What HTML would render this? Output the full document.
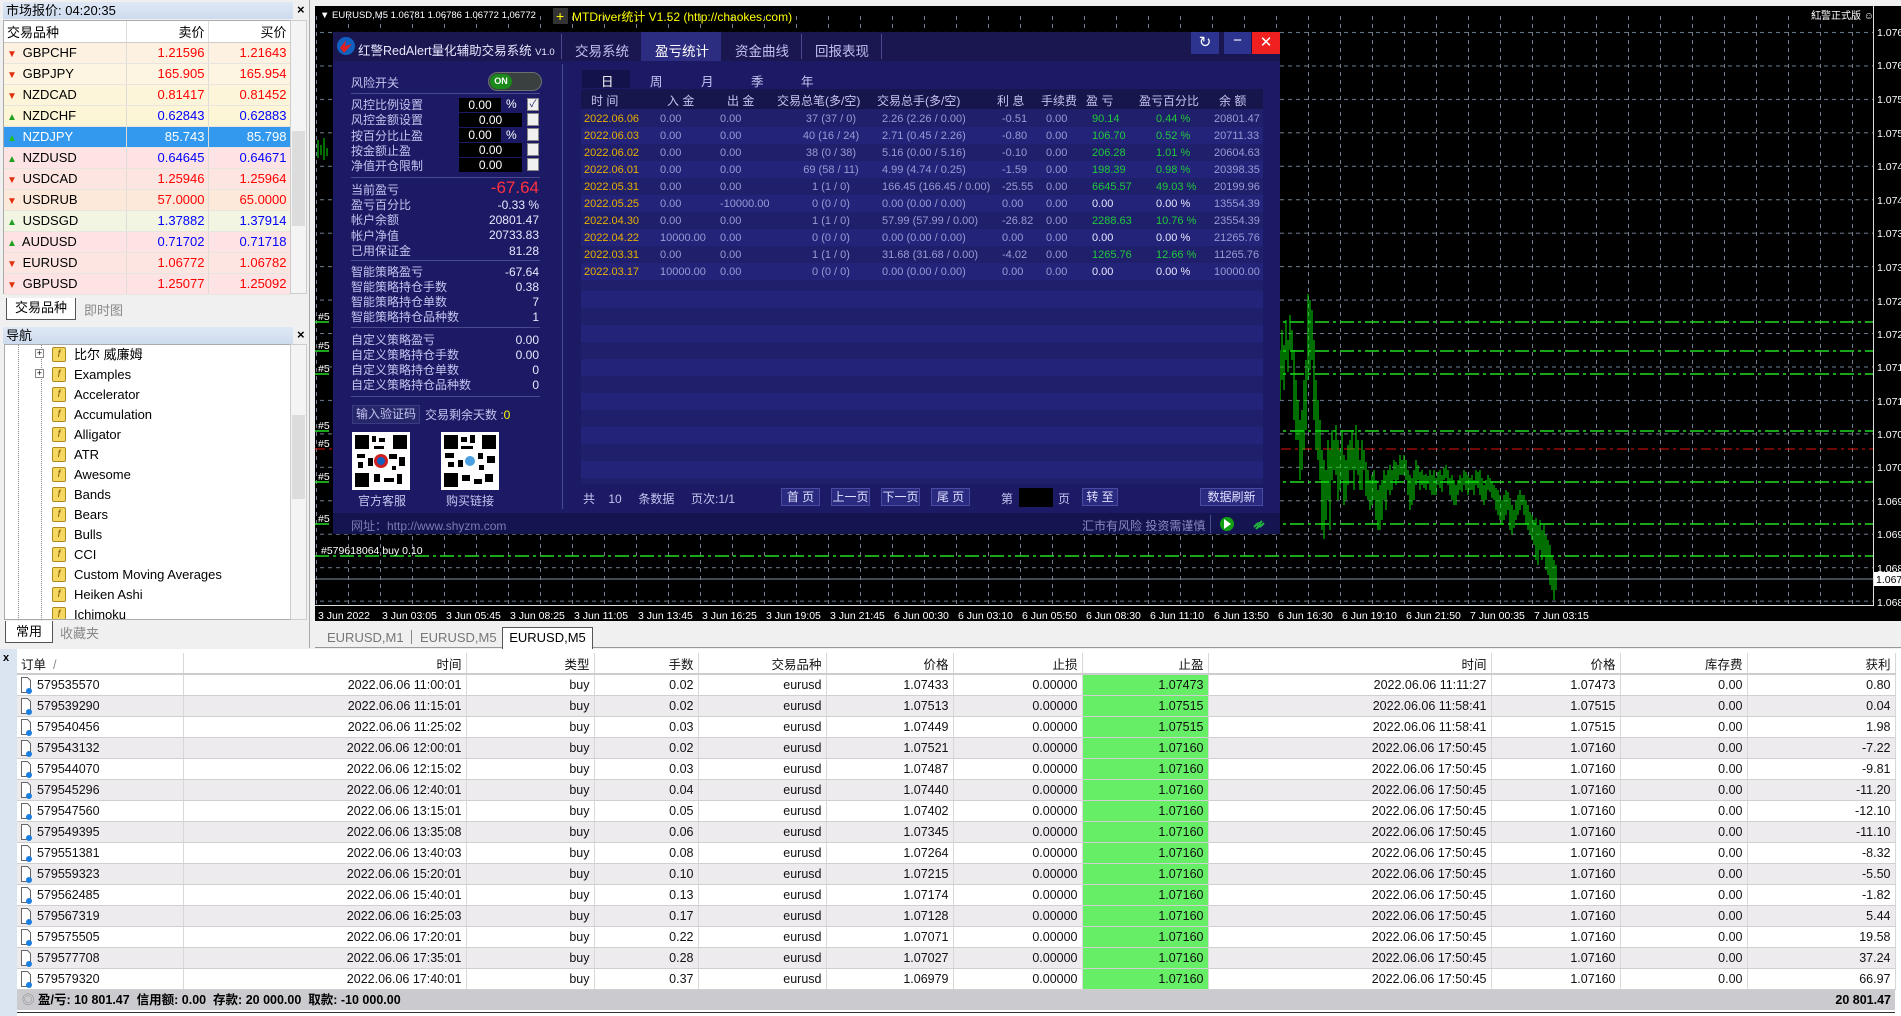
<!DOCTYPE html>
<html><head><meta charset="utf-8">
<style>
*{margin:0;padding:0;box-sizing:border-box}
body{width:1901px;height:1016px;overflow:hidden;background:#f0f0f0;position:relative;font-family:"Liberation Sans","Noto Sans CJK SC",sans-serif;font-size:12px}
.a{position:absolute;white-space:nowrap}
.mw td{height:21px;border-right:1px solid #e0dcd8;border-bottom:1px solid #e8e4e0;font-size:13px;padding:0 3px}
.ar{font-size:10px;display:inline-block;width:12px}
.dl{color:#c4c4f0;font-size:12px}
.dv{color:#e8e8ff;font-size:12px;text-align:right}
.tb td{height:21px;font-size:12.5px;color:#111;padding:0 4px;text-align:right;border-right:1px solid #d8d8d8;border-bottom:1px solid #d0d0d0}
.tb tr:nth-child(even) td{background:#eeebee}
.tb tr:nth-child(odd) td{background:#fff}
.tb td.g{background:#66ee66 !important}
.tb td.o{text-align:left;padding-left:20px;position:relative}
.st td{height:17px;font-size:11px;color:#9a9ad4;white-space:nowrap;padding:0 3px}
.st tr:nth-child(odd) td{background:#1f1f6c}
.st tr:nth-child(even) td{background:#23237a}
.st td.d{color:#e8b000}
.st td.gr{color:#22c83a}
.btn{position:absolute;height:18px;border:1px solid #4a4aa0;background:#2a2a80;color:#e0e0ff;font-size:12px;text-align:center;line-height:16px}
.ni{position:relative;height:20px}
.fi{position:absolute;left:52px;top:2px;width:14px;height:15px;background:#f5d860;border:1px solid #b08a20;border-radius:2px;font-size:10px;line-height:13px;text-align:center;color:#805000;font-style:italic}
.nt{position:absolute;left:74px}
</style></head><body>

<!-- LEFT: Market watch -->
<div class="a" style="left:0;top:0;width:310px;height:648px;background:#f0f0f0;border-right:1px solid #aaa"></div>
<div class="a" style="left:3px;top:2px;width:290px;height:17px;background:linear-gradient(#dfe8f5,#cddbef);font-size:13px;line-height:17px;padding-left:3px">市场报价: 04:20:35</div>
<div class="a" style="left:297px;top:2px;font-size:13px;font-weight:bold">×</div>
<div class="a" style="left:3px;top:20px;width:287px;height:274px;background:#fff;border:1px solid #aaa">
<table class="mw" style="border-collapse:collapse;width:286px;table-layout:fixed">
<colgroup><col style="width:122px"><col style="width:82px"><col style="width:82px"></colgroup>
<tr style="background:#fff"><td style="height:20px;border-bottom:1px solid #ccc">交易品种</td><td style="text-align:right;border-bottom:1px solid #ccc">卖价</td><td style="text-align:right;border-bottom:1px solid #ccc">买价</td></tr>
<tr style="background:#fdf2e2"><td><span class="ar" style="color:#e03010">▼</span> GBPCHF</td><td style="text-align:right;color:#f00">1.21596</td><td style="text-align:right;color:#f00">1.21643</td></tr>
<tr style="background:#fdf4e2"><td><span class="ar" style="color:#e03010">▼</span> GBPJPY</td><td style="text-align:right;color:#f00">165.905</td><td style="text-align:right;color:#f00">165.954</td></tr>
<tr style="background:#fdf5da"><td><span class="ar" style="color:#e03010">▼</span> NZDCAD</td><td style="text-align:right;color:#f00">0.81417</td><td style="text-align:right;color:#f00">0.81452</td></tr>
<tr style="background:#fcf6d6"><td><span class="ar" style="color:#20a020">▲</span> NZDCHF</td><td style="text-align:right;color:#00f">0.62843</td><td style="text-align:right;color:#00f">0.62883</td></tr>
<tr style="background:#3399ee;color:#fff"><td><span class="ar" style="color:#20c020">▲</span> NZDJPY</td><td style="text-align:right">85.743</td><td style="text-align:right">85.798</td></tr>
<tr style="background:#fde3e3"><td><span class="ar" style="color:#20a020">▲</span> NZDUSD</td><td style="text-align:right;color:#00f">0.64645</td><td style="text-align:right;color:#00f">0.64671</td></tr>
<tr style="background:#fde5e1"><td><span class="ar" style="color:#e03010">▼</span> USDCAD</td><td style="text-align:right;color:#f00">1.25946</td><td style="text-align:right;color:#f00">1.25964</td></tr>
<tr style="background:#fde9da"><td><span class="ar" style="color:#e03010">▼</span> USDRUB</td><td style="text-align:right;color:#f00">57.0000</td><td style="text-align:right;color:#f00">65.0000</td></tr>
<tr style="background:#f2f5e2"><td><span class="ar" style="color:#20a020">▲</span> USDSGD</td><td style="text-align:right;color:#00f">1.37882</td><td style="text-align:right;color:#00f">1.37914</td></tr>
<tr style="background:#fde3e3"><td><span class="ar" style="color:#20a020">▲</span> AUDUSD</td><td style="text-align:right;color:#00f">0.71702</td><td style="text-align:right;color:#00f">0.71718</td></tr>
<tr style="background:#fde6e2"><td><span class="ar" style="color:#e03010">▼</span> EURUSD</td><td style="text-align:right;color:#f00">1.06772</td><td style="text-align:right;color:#f00">1.06782</td></tr>
<tr style="background:#fde3e3"><td><span class="ar" style="color:#e03010">▼</span> GBPUSD</td><td style="text-align:right;color:#f00">1.25077</td><td style="text-align:right;color:#f00">1.25092</td></tr>
</table></div>
<div class="a" style="left:290px;top:20px;width:17px;height:274px;background:#f4f4f4;border:1px solid #ccc"><div style="position:absolute;top:110px;left:1px;width:13px;height:95px;background:#dcdcdc"></div></div>
<div class="a" style="left:6px;top:298px;width:70px;height:22px;background:#fff;border:1px solid #555;border-top:none;font-size:13px;text-align:center;line-height:20px">交易品种</div>
<div class="a" style="left:84px;top:300px;font-size:13px;color:#888">即时图</div>

<!-- Navigator -->
<div class="a" style="left:3px;top:327px;width:290px;height:17px;background:linear-gradient(#dfe8f5,#cddbef);font-size:13px;line-height:17px;padding-left:3px">导航</div>
<div class="a" style="left:297px;top:327px;font-size:13px;font-weight:bold">×</div>
<div class="a" style="left:4px;top:344px;width:303px;height:276px;background:#fff;border:1px solid #aaa"></div>
<div class="a" style="left:290px;top:344px;width:17px;height:276px;background:#f4f4f4;border:1px solid #ccc"><div style="position:absolute;top:70px;left:1px;width:13px;height:84px;background:#dcdcdc"></div></div>
<div class="a" style="left:18px;top:345px;width:0;height:275px;border-left:1px dotted #888"></div>
<div class="a" style="left:41px;top:345px;width:0;height:275px;border-left:1px dotted #888"></div>
<div class="a" style="left:5px;top:621px;width:48px;height:22px;background:#fff;border:1px solid #555;border-top:none;font-size:13px;text-align:center">常用</div>
<div class="a" style="left:60px;top:623px;font-size:13px;color:#888">收藏夹</div>

<!-- CHART -->
<div class="a" style="left:315px;top:6px;width:1586px;height:615px;background:#000"></div>
<svg class="a" style="left:0;top:0" width="1901" height="622">
<defs><pattern id="gv" x="316" y="0" width="32" height="8" patternUnits="userSpaceOnUse"><rect x="0" y="0" width="1" height="4" fill="#708090"/></pattern>
<pattern id="gh" x="0" y="0" width="8" height="33.45" patternUnits="userSpaceOnUse"><rect x="0" y="32" width="4" height="1" fill="#708090"/></pattern></defs>
<rect x="316" y="14" width="1557" height="591" fill="url(#gv)"/>
<rect x="316" y="14" width="1557" height="591" fill="url(#gh)"/>
<rect x="1873" y="6" width="1" height="600" fill="#ddd"/>
<rect x="315" y="605" width="1559" height="1" fill="#ddd"/>
<g stroke="#22dd22" stroke-width="1.5" stroke-dasharray="14,4,3,4">
<line x1="315" y1="322" x2="1873" y2="322"/><line x1="315" y1="351" x2="1873" y2="351"/><line x1="315" y1="374" x2="1873" y2="374"/><line x1="315" y1="431" x2="1873" y2="431"/><line x1="315" y1="482" x2="1873" y2="482"/><line x1="315" y1="524" x2="1873" y2="524"/><line x1="315" y1="556" x2="1873" y2="556"/></g>
<line x1="315" y1="449" x2="1873" y2="449" stroke="#e01010" stroke-dasharray="10,4,3,4"/>
<line x1="315" y1="579" x2="1873" y2="579" stroke="#8090a0"/>
<rect x="1874" y="572" width="27" height="14" fill="#fff"/>
<path stroke="#00dd00" stroke-width="1" fill="none" d="M318 140V158M321 145V155M324 138V160M327 148V156M1280 350V400M1282 330V380M1284 345V390M1286 320V360M1288 340V372M1290 315V350M1292 330V360M1294 350V420M1296 380V440M1298 400V440M1300 420V480M1302 410V470M1304 380V450M1306 360V430M1308 294V380M1310 300V370M1312 310V360M1314 340V420M1316 380V450M1318 400V460M1320 420V480M1322 450V530M1324 460V539M1326 470V520M1328 440V500M1330 450V530M1332 430V480M1334 440V470M1336 425V475M1338 440V500M1340 450V490M1342 430V480M1344 455V505M1346 460V500M1348 445V485M1350 440V470M1352 430V470M1354 448V490M1356 425V470M1358 440V475M1360 460V490M1362 440V490M1364 450V470M1366 462V496M1368 470V500M1370 480V510M1372 475V505M1374 470V500M1376 480V520M1378 490V530M1380 485V530M1382 480V520M1384 470V500M1386 475V510M1388 470V490M1390 465V495M1392 470V490M1394 460V480M1396 462V485M1398 465V480M1400 455V475M1402 460V475M1404 455V475M1406 460V480M1408 470V495M1410 475V510M1412 478V505M1414 470V500M1416 460V485M1418 465V480M1420 472V490M1422 470V485M1424 475V488M1426 474V490M1428 476V484M1430 470V490M1432 475V495M1434 470V495M1436 478V495M1438 472V485M1440 470V488M1442 475V492M1444 468V480M1446 465V478M1448 470V485M1450 478V495M1452 475V500M1454 480V505M1456 485V505M1458 480V495M1460 475V490M1462 478V492M1464 470V485M1466 472V490M1468 475V495M1470 478V490M1472 475V490M1474 480V495M1476 470V485M1478 472V488M1480 470V495M1482 478V500M1484 485V505M1486 480V500M1488 475V490M1490 478V492M1492 482V498M1494 485V500M1496 488V510M1498 490V515M1500 495V520M1502 500V525M1504 495V520M1506 490V515M1508 492V510M1510 498V530M1512 505V535M1514 510V528M1516 500V520M1518 495V515M1520 490V510M1522 495V505M1524 495V515M1526 500V525M1528 505V530M1530 512V535M1532 515V540M1534 520V545M1536 518V560M1538 525V565M1540 520V550M1542 530V560M1544 525V555M1546 535V570M1548 540V575M1550 545V585M1552 555V590M1554 560V600M1556 565V590"/>
<g fill="#fff" font-size="10.5" font-family="Liberation Sans,sans-serif">
<text x="1877" y="36">1.0765</text><text x="1877" y="69">1.0760</text><text x="1877" y="103">1.0755</text><text x="1877" y="137">1.0750</text><text x="1877" y="170">1.0745</text><text x="1877" y="204">1.0740</text><text x="1877" y="237">1.0735</text><text x="1877" y="271">1.0730</text><text x="1877" y="305">1.0725</text><text x="1877" y="338">1.0720</text><text x="1877" y="371">1.0715</text><text x="1877" y="405">1.0710</text><text x="1877" y="438">1.0705</text><text x="1877" y="471">1.0700</text><text x="1877" y="505">1.0695</text><text x="1877" y="538">1.0690</text><text x="1877" y="572">1.0685</text><text x="1877" y="606">1.0680</text>
<text x="1876" y="583" fill="#000">1.0677</text>
<text x="318" y="619">3 Jun 2022</text><text x="382" y="619">3 Jun 03:05</text><text x="446" y="619">3 Jun 05:45</text><text x="510" y="619">3 Jun 08:25</text><text x="574" y="619">3 Jun 11:05</text><text x="638" y="619">3 Jun 13:45</text><text x="702" y="619">3 Jun 16:25</text><text x="766" y="619">3 Jun 19:05</text><text x="830" y="619">3 Jun 21:45</text><text x="894" y="619">6 Jun 00:30</text><text x="958" y="619">6 Jun 03:10</text><text x="1022" y="619">6 Jun 05:50</text><text x="1086" y="619">6 Jun 08:30</text><text x="1150" y="619">6 Jun 11:10</text><text x="1214" y="619">6 Jun 13:50</text><text x="1278" y="619">6 Jun 16:30</text><text x="1342" y="619">6 Jun 19:10</text><text x="1406" y="619">6 Jun 21:50</text><text x="1470" y="619">7 Jun 00:35</text><text x="1534" y="619">7 Jun 03:15</text>
<text x="320" y="18" font-size="9.5">▼ EURUSD,M5  1.06781 1.06786 1.06772 1.06772</text>
<text x="1811" y="19" font-size="10">紅警正式版 ☺</text>
<text x="318" y="320">#5</text><text x="318" y="349">#5</text><text x="318" y="372">#5</text><text x="318" y="429">#5</text><text x="318" y="447">#5</text><text x="318" y="480">#5</text><text x="318" y="522">#5</text><text x="321" y="554">#579618064 buy 0.10</text>
</g>
<rect x="553" y="8" width="15" height="16" fill="#333"/>
<text x="556" y="21" fill="#ff0" font-size="14">+</text>
<text x="572" y="21" fill="#ffff00" font-size="12" font-family="Liberation Sans,Noto Sans CJK SC,sans-serif">MTDriver统计 V1.52  (http://chaokes.com)</text>
</svg>

<!-- DIALOG -->
<div class="a" style="left:333px;top:32px;width:947px;height:502px;background:#1c1a64"></div>
<div class="a" style="left:333px;top:32px;width:947px;height:29px;background:#191650"></div>
<svg class="a" style="left:336px;top:36px" width="20" height="20"><circle cx="10" cy="10" r="9" fill="#1060c0"/><path d="M4 12L10 4L9 10L16 8L8 17" fill="#e02020"/></svg>
<div class="a" style="left:358px;top:40px;color:#e8e8ff;font-size:12.5px">红警RedAlert量化辅助交易系统 <span style="font-size:9.5px">V1.0</span></div>
<div class="a" style="left:561px;top:34px;width:1px;height:25px;background:#4a4a90"></div>
<div class="a" style="left:575px;top:40px;color:#c0c0f0;font-size:13.5px">交易系统</div>
<div class="a" style="left:641px;top:32px;width:80px;height:29px;background:#2c2c80"></div>
<div class="a" style="left:655px;top:40px;color:#fff;font-size:13.5px">盈亏统计</div>
<div class="a" style="left:735px;top:40px;color:#c0c0f0;font-size:13.5px">资金曲线</div>
<div class="a" style="left:801px;top:34px;width:1px;height:25px;background:#4a4a90"></div>
<div class="a" style="left:815px;top:40px;color:#c0c0f0;font-size:13.5px">回报表现</div>
<div class="a" style="left:881px;top:34px;width:1px;height:25px;background:#4a4a90"></div>
<div class="a" style="left:1191px;top:32px;width:28px;height:22px;background:#2c3490;color:#fff;text-align:center;font-size:15px;line-height:22px">↻</div>
<div class="a" style="left:1224px;top:32px;width:27px;height:22px;background:#2c3490;color:#fff;text-align:center;font-size:15px;line-height:18px">−</div>
<div class="a" style="left:1252px;top:32px;width:28px;height:22px;background:#ee2020;color:#fff;text-align:center;font-size:15px;line-height:22px">✕</div>

<!-- dialog left -->
<div class="a dl" style="left:351px;top:74px">风险开关</div>
<div class="a" style="left:488px;top:72px;width:54px;height:19px;border-radius:10px;background:#3a4040;border:1px solid #6a7070"><div style="position:absolute;left:1px;top:1px;width:22px;height:15px;border-radius:8px;background:#1a8a1a;color:#fff;font-size:9px;font-weight:bold;text-align:center;line-height:15px">ON</div></div>
<div class="a" style="left:351px;top:93px;width:189px;height:1px;background:#4a4a90"></div>
<div class="a dl" style="left:351px;top:98px;line-height:15.3px">风控比例设置<br>风控金额设置<br>按百分比止盈<br>按金额止盈<br>净值开仓限制</div>
<div class="a" style="left:459px;top:98px;width:42px;height:14px;background:#000;color:#fff;text-align:center;font-size:12px;line-height:14px">0.00</div>
<div class="a" style="left:459px;top:113px;width:63px;height:14px;background:#000;color:#fff;text-align:center;font-size:12px;line-height:14px">0.00</div>
<div class="a" style="left:459px;top:128px;width:42px;height:14px;background:#000;color:#fff;text-align:center;font-size:12px;line-height:14px">0.00</div>
<div class="a" style="left:459px;top:143px;width:63px;height:14px;background:#000;color:#fff;text-align:center;font-size:12px;line-height:14px">0.00</div>
<div class="a" style="left:459px;top:158px;width:63px;height:14px;background:#000;color:#fff;text-align:center;font-size:12px;line-height:14px">0.00</div>
<div class="a" style="left:506px;top:97px;color:#fff">%</div><div class="a" style="left:506px;top:128px;color:#fff">%</div>
<div class="a" style="left:527px;top:98px;width:12px;height:13px;background:#f0f0f0;border:1px solid #888;color:#226;font-size:10px;line-height:11px;text-align:center">✓</div>
<div class="a" style="left:527px;top:113px;width:12px;height:13px;background:#f0f0f0;border:1px solid #888"></div>
<div class="a" style="left:527px;top:128px;width:12px;height:13px;background:#f0f0f0;border:1px solid #888"></div>
<div class="a" style="left:527px;top:143px;width:12px;height:13px;background:#f0f0f0;border:1px solid #888"></div>
<div class="a" style="left:527px;top:158px;width:12px;height:13px;background:#f0f0f0;border:1px solid #888"></div>
<div class="a" style="left:351px;top:177px;width:189px;height:1px;background:#4a4a90"></div>
<div class="a dl" style="left:351px;top:183px;line-height:15.2px">当前盈亏<br>盈亏百分比<br>帐户余额<br>帐户净值<br>已用保证金</div>
<div class="a" style="left:470px;top:178px;width:69px;text-align:right;color:#ff3040;font-size:17px">-67.64</div>
<div class="a dv" style="left:440px;top:198px;width:99px;line-height:15.2px">-0.33 %<br>20801.47<br>20733.83<br>81.28</div>
<div class="a" style="left:351px;top:260px;width:189px;height:1px;background:#4a4a90"></div>
<div class="a dl" style="left:351px;top:265px;line-height:15px">智能策略盈亏<br>智能策略持仓手数<br>智能策略持仓单数<br>智能策略持仓品种数</div>
<div class="a dv" style="left:440px;top:265px;width:99px;line-height:15px">-67.64<br>0.38<br>7<br>1</div>
<div class="a" style="left:351px;top:327px;width:189px;height:1px;background:#4a4a90"></div>
<div class="a dl" style="left:351px;top:333px;line-height:15px">自定义策略盈亏<br>自定义策略持仓手数<br>自定义策略持仓单数<br>自定义策略持仓品种数</div>
<div class="a dv" style="left:440px;top:333px;width:99px;line-height:15px">0.00<br>0.00<br>0<br>0</div>
<div class="a" style="left:351px;top:396px;width:189px;height:1px;background:#4a4a90"></div>
<div class="a" style="left:352px;top:405px;width:68px;height:19px;background:#26266a;border:1px solid #3a3a80;color:#c4c4f0;font-size:12px;text-align:center;line-height:17px">输入验证码</div>
<div class="a dl" style="left:425px;top:406px">交易剩余天数 :<span style="color:#ff0">0</span></div>
<svg class="a" style="left:352px;top:432px" width="58" height="58"><rect width="58" height="58" fill="#fff"/><g fill="#000"><rect x="3" y="3" width="14" height="14"/><rect x="41" y="3" width="14" height="14"/><rect x="3" y="41" width="14" height="14"/><rect x="20" y="4" width="4" height="6"/><rect x="27" y="6" width="6" height="4"/><rect x="22" y="14" width="10" height="3"/><rect x="5" y="22" width="8" height="4"/><rect x="16" y="26" width="5" height="8"/><rect x="37" y="22" width="8" height="5"/><rect x="47" y="25" width="6" height="9"/><rect x="22" y="42" width="6" height="8"/><rect x="32" y="46" width="10" height="4"/><rect x="45" y="42" width="5" height="10"/><rect x="6" y="30" width="5" height="6"/><rect x="40" y="34" width="4" height="4"/></g><circle cx="29" cy="29" r="7" fill="#d02020"/><circle cx="29" cy="29" r="4" fill="#1060c0"/></svg>
<svg class="a" style="left:441px;top:432px" width="58" height="58"><rect width="58" height="58" fill="#fff"/><g fill="#000"><rect x="3" y="3" width="14" height="14"/><rect x="41" y="3" width="14" height="14"/><rect x="3" y="41" width="14" height="14"/><rect x="20" y="5" width="6" height="5"/><rect x="29" y="3" width="5" height="8"/><rect x="20" y="14" width="12" height="3"/><rect x="4" y="21" width="9" height="5"/><rect x="17" y="28" width="5" height="7"/><rect x="37" y="21" width="5" height="6"/><rect x="46" y="24" width="8" height="7"/><rect x="21" y="43" width="8" height="6"/><rect x="33" y="47" width="8" height="5"/><rect x="44" y="42" width="8" height="8"/><rect x="7" y="30" width="6" height="5"/><rect x="38" y="33" width="5" height="5"/></g><circle cx="29" cy="29" r="5" fill="#4aa0e0"/></svg>
<div class="a dl" style="left:358px;top:492px">官方客服</div>
<div class="a dl" style="left:446px;top:492px">购买链接</div>
<div class="a" style="left:562px;top:64px;width:1px;height:445px;background:#4a4a90"></div>

<!-- dialog right table -->
<div class="a" style="left:581px;top:70px;width:682px;height:414px;background:repeating-linear-gradient(#1f1f6c 0 17px,#23237a 17px 34px)"></div>
<div class="a" style="left:581px;top:70px;width:682px;height:19px;background:#1c1a64"></div>
<div class="a" style="left:582px;top:70px;width:48px;height:18px;background:#13124a"></div>
<div class="a" style="left:601px;top:71px;color:#fff;font-size:12.5px">日</div>
<div class="a" style="left:650px;top:71px;color:#c4c4f0;font-size:12.5px">周</div>
<div class="a" style="left:701px;top:71px;color:#c4c4f0;font-size:12.5px">月</div>
<div class="a" style="left:751px;top:71px;color:#c4c4f0;font-size:12.5px">季</div>
<div class="a" style="left:801px;top:71px;color:#c4c4f0;font-size:12.5px">年</div>
<div class="a" style="left:581px;top:89px;width:682px;height:20px;background:#16154c"></div>
<div class="a" style="left:581px;top:92px;width:682px;color:#c4c4f0;font-size:12px">
<span class="a" style="left:10px">时 间</span><span class="a" style="left:86px">入 金</span><span class="a" style="left:146px">出 金</span><span class="a" style="left:196px">交易总笔(多/空)</span><span class="a" style="left:296px">交易总手(多/空)</span><span class="a" style="left:416px">利 息</span><span class="a" style="left:460px">手续费</span><span class="a" style="left:505px">盈 亏</span><span class="a" style="left:558px">盈亏百分比</span><span class="a" style="left:638px">余 额</span></div>
<table class="st a" style="left:581px;top:110px;border-collapse:collapse;width:682px;table-layout:fixed">
<colgroup><col style="width:76px"><col style="width:60px"><col style="width:66px"><col style="width:96px"><col style="width:120px"><col style="width:44px"><col style="width:46px"><col style="width:64px"><col style="width:58px"><col style="width:52px"></colgroup>
<tr><td class="d">2022.06.06</td><td>0.00</td><td>0.00</td><td style="text-align:center">37 (37 / 0)</td><td>2.26 (2.26 / 0.00)</td><td>-0.51</td><td>0.00</td><td class="gr">90.14</td><td class="gr">0.44 %</td><td>20801.47</td></tr>
<tr><td class="d">2022.06.03</td><td>0.00</td><td>0.00</td><td style="text-align:center">40 (16 / 24)</td><td>2.71 (0.45 / 2.26)</td><td>-0.80</td><td>0.00</td><td class="gr">106.70</td><td class="gr">0.52 %</td><td>20711.33</td></tr>
<tr><td class="d">2022.06.02</td><td>0.00</td><td>0.00</td><td style="text-align:center">38 (0 / 38)</td><td>5.16 (0.00 / 5.16)</td><td>-0.10</td><td>0.00</td><td class="gr">206.28</td><td class="gr">1.01 %</td><td>20604.63</td></tr>
<tr><td class="d">2022.06.01</td><td>0.00</td><td>0.00</td><td style="text-align:center">69 (58 / 11)</td><td>4.99 (4.74 / 0.25)</td><td>-1.59</td><td>0.00</td><td class="gr">198.39</td><td class="gr">0.98 %</td><td>20398.35</td></tr>
<tr><td class="d">2022.05.31</td><td>0.00</td><td>0.00</td><td style="text-align:center">1 (1 / 0)</td><td>166.45 (166.45 / 0.00)</td><td>-25.55</td><td>0.00</td><td class="gr">6645.57</td><td class="gr">49.03 %</td><td>20199.96</td></tr>
<tr><td class="d">2022.05.25</td><td>0.00</td><td>-10000.00</td><td style="text-align:center">0 (0 / 0)</td><td>0.00 (0.00 / 0.00)</td><td>0.00</td><td>0.00</td><td style="color:#e8e8ff">0.00</td><td style="color:#e8e8ff">0.00 %</td><td>13554.39</td></tr>
<tr><td class="d">2022.04.30</td><td>0.00</td><td>0.00</td><td style="text-align:center">1 (1 / 0)</td><td>57.99 (57.99 / 0.00)</td><td>-26.82</td><td>0.00</td><td class="gr">2288.63</td><td class="gr">10.76 %</td><td>23554.39</td></tr>
<tr><td class="d">2022.04.22</td><td>10000.00</td><td>0.00</td><td style="text-align:center">0 (0 / 0)</td><td>0.00 (0.00 / 0.00)</td><td>0.00</td><td>0.00</td><td style="color:#e8e8ff">0.00</td><td style="color:#e8e8ff">0.00 %</td><td>21265.76</td></tr>
<tr><td class="d">2022.03.31</td><td>0.00</td><td>0.00</td><td style="text-align:center">1 (1 / 0)</td><td>31.68 (31.68 / 0.00)</td><td>-4.02</td><td>0.00</td><td class="gr">1265.76</td><td class="gr">12.66 %</td><td>11265.76</td></tr>
<tr><td class="d">2022.03.17</td><td>10000.00</td><td>0.00</td><td style="text-align:center">0 (0 / 0)</td><td>0.00 (0.00 / 0.00)</td><td>0.00</td><td>0.00</td><td style="color:#e8e8ff">0.00</td><td style="color:#e8e8ff">0.00 %</td><td>10000.00</td></tr>
</table>
<div class="a" style="left:581px;top:484px;width:682px;height:28px;background:#1c1a64"></div>
<div class="a dl" style="left:583px;top:490px">共&nbsp;&nbsp;&nbsp; 10&nbsp;&nbsp;&nbsp;&nbsp; 条数据&nbsp;&nbsp;&nbsp;&nbsp; 页次:1/1</div>
<div class="btn" style="left:781px;top:488px;width:39px">首 页</div>
<div class="btn" style="left:831px;top:488px;width:39px">上一页</div>
<div class="btn" style="left:881px;top:488px;width:39px">下一页</div>
<div class="btn" style="left:931px;top:488px;width:39px">尾 页</div>
<div class="a dl" style="left:1001px;top:490px">第</div>
<div class="a" style="left:1019px;top:488px;width:34px;height:19px;background:#000"></div>
<div class="a dl" style="left:1058px;top:490px">页</div>
<div class="btn" style="left:1082px;top:488px;width:36px">转 至</div>
<div class="btn" style="left:1200px;top:488px;width:63px">数据刷新</div>
<div class="a" style="left:333px;top:513px;width:947px;height:21px;background:#141450"></div>
<div class="a" style="left:351px;top:517px;color:#7a7ab4;font-size:12px">网址：http://www.shyzm.com</div>
<div class="a" style="left:1082px;top:517px;color:#8a8ac4;font-size:12px">汇市有风险 投资需谨慎</div>
<div class="a" style="left:1210px;top:515px;width:1px;height:18px;background:#4a4a90"></div>
<svg class="a" style="left:1218px;top:515px" width="60" height="18"><circle cx="9" cy="9" r="7" fill="#14a014"/><path d="M6 4L13 9L6 14Z" fill="#fff"/><path d="M38 14l4-4M36 12l3-3a2 2 0 0 1 3 3M44 6l-3 3M46 8l-3 3a2 2 0 0 1-3-3" stroke="#20b040" stroke-width="2" fill="none"/></svg>

<!-- chart tabs -->
<div class="a" style="left:315px;top:621px;width:1586px;height:27px;background:#f0f0f0;border-bottom:1px solid #999"></div>
<div class="a" style="left:327px;top:630px;color:#777;font-size:13px">EURUSD,M1</div>
<div class="a" style="left:411px;top:630px;width:1px;height:14px;background:#888"></div>
<div class="a" style="left:420px;top:630px;color:#777;font-size:13px">EURUSD,M5</div>
<div class="a" style="left:502px;top:627px;width:91px;height:22px;background:#fff;border:1px solid #555;border-bottom:none;font-size:13px;text-align:center;line-height:20px">EURUSD,M5</div>

<!-- TERMINAL -->
<div class="a" style="left:0;top:649px;width:1901px;height:367px;background:#fff"></div>
<div class="a" style="left:0;top:649px;width:17px;height:367px;background:#dbe5f1"></div>
<div class="a" style="left:3px;top:652px;font-size:11px;font-weight:bold">x</div>
<table class="tb a" style="left:17px;top:653px;border-collapse:collapse;table-layout:fixed;width:1878px">
<colgroup><col style="width:166px"><col style="width:283px"><col style="width:128px"><col style="width:104px"><col style="width:128px"><col style="width:127px"><col style="width:129px"><col style="width:126px"><col style="width:283px"><col style="width:129px"><col style="width:127px"><col style="width:148px"></colgroup>
<tr><td style="text-align:left;background:#fff;height:21px;border-bottom:2px solid #ccc">订单 &nbsp;<span style="color:#888">/</span></td><td style="background:#fff;border-bottom:2px solid #ccc">时间</td><td style="background:#fff;border-bottom:2px solid #ccc">类型</td><td style="background:#fff;border-bottom:2px solid #ccc">手数</td><td style="background:#fff;border-bottom:2px solid #ccc">交易品种</td><td style="background:#fff;border-bottom:2px solid #ccc">价格</td><td style="background:#fff;border-bottom:2px solid #ccc">止损</td><td style="background:#fff;border-bottom:2px solid #ccc">止盈</td><td style="background:#fff;border-bottom:2px solid #ccc">时间</td><td style="background:#fff;border-bottom:2px solid #ccc">价格</td><td style="background:#fff;border-bottom:2px solid #ccc">库存费</td><td style="background:#fff;border-bottom:2px solid #ccc">获利</td></tr>
<tbody>
<tr><td class="o">579535570</td><td>2022.06.06 11:00:01</td><td>buy</td><td>0.02</td><td>eurusd</td><td>1.07433</td><td>0.00000</td><td class="g">1.07473</td><td>2022.06.06 11:11:27</td><td>1.07473</td><td>0.00</td><td>0.80</td></tr>
<tr><td class="o">579539290</td><td>2022.06.06 11:15:01</td><td>buy</td><td>0.02</td><td>eurusd</td><td>1.07513</td><td>0.00000</td><td class="g">1.07515</td><td>2022.06.06 11:58:41</td><td>1.07515</td><td>0.00</td><td>0.04</td></tr>
<tr><td class="o">579540456</td><td>2022.06.06 11:25:02</td><td>buy</td><td>0.03</td><td>eurusd</td><td>1.07449</td><td>0.00000</td><td class="g">1.07515</td><td>2022.06.06 11:58:41</td><td>1.07515</td><td>0.00</td><td>1.98</td></tr>
<tr><td class="o">579543132</td><td>2022.06.06 12:00:01</td><td>buy</td><td>0.02</td><td>eurusd</td><td>1.07521</td><td>0.00000</td><td class="g">1.07160</td><td>2022.06.06 17:50:45</td><td>1.07160</td><td>0.00</td><td>-7.22</td></tr>
<tr><td class="o">579544070</td><td>2022.06.06 12:15:02</td><td>buy</td><td>0.03</td><td>eurusd</td><td>1.07487</td><td>0.00000</td><td class="g">1.07160</td><td>2022.06.06 17:50:45</td><td>1.07160</td><td>0.00</td><td>-9.81</td></tr>
<tr><td class="o">579545296</td><td>2022.06.06 12:40:01</td><td>buy</td><td>0.04</td><td>eurusd</td><td>1.07440</td><td>0.00000</td><td class="g">1.07160</td><td>2022.06.06 17:50:45</td><td>1.07160</td><td>0.00</td><td>-11.20</td></tr>
<tr><td class="o">579547560</td><td>2022.06.06 13:15:01</td><td>buy</td><td>0.05</td><td>eurusd</td><td>1.07402</td><td>0.00000</td><td class="g">1.07160</td><td>2022.06.06 17:50:45</td><td>1.07160</td><td>0.00</td><td>-12.10</td></tr>
<tr><td class="o">579549395</td><td>2022.06.06 13:35:08</td><td>buy</td><td>0.06</td><td>eurusd</td><td>1.07345</td><td>0.00000</td><td class="g">1.07160</td><td>2022.06.06 17:50:45</td><td>1.07160</td><td>0.00</td><td>-11.10</td></tr>
<tr><td class="o">579551381</td><td>2022.06.06 13:40:03</td><td>buy</td><td>0.08</td><td>eurusd</td><td>1.07264</td><td>0.00000</td><td class="g">1.07160</td><td>2022.06.06 17:50:45</td><td>1.07160</td><td>0.00</td><td>-8.32</td></tr>
<tr><td class="o">579559323</td><td>2022.06.06 15:20:01</td><td>buy</td><td>0.10</td><td>eurusd</td><td>1.07215</td><td>0.00000</td><td class="g">1.07160</td><td>2022.06.06 17:50:45</td><td>1.07160</td><td>0.00</td><td>-5.50</td></tr>
<tr><td class="o">579562485</td><td>2022.06.06 15:40:01</td><td>buy</td><td>0.13</td><td>eurusd</td><td>1.07174</td><td>0.00000</td><td class="g">1.07160</td><td>2022.06.06 17:50:45</td><td>1.07160</td><td>0.00</td><td>-1.82</td></tr>
<tr><td class="o">579567319</td><td>2022.06.06 16:25:03</td><td>buy</td><td>0.17</td><td>eurusd</td><td>1.07128</td><td>0.00000</td><td class="g">1.07160</td><td>2022.06.06 17:50:45</td><td>1.07160</td><td>0.00</td><td>5.44</td></tr>
<tr><td class="o">579575505</td><td>2022.06.06 17:20:01</td><td>buy</td><td>0.22</td><td>eurusd</td><td>1.07071</td><td>0.00000</td><td class="g">1.07160</td><td>2022.06.06 17:50:45</td><td>1.07160</td><td>0.00</td><td>19.58</td></tr>
<tr><td class="o">579577708</td><td>2022.06.06 17:35:01</td><td>buy</td><td>0.28</td><td>eurusd</td><td>1.07027</td><td>0.00000</td><td class="g">1.07160</td><td>2022.06.06 17:50:45</td><td>1.07160</td><td>0.00</td><td>37.24</td></tr>
<tr><td class="o">579579320</td><td>2022.06.06 17:40:01</td><td>buy</td><td>0.37</td><td>eurusd</td><td>1.06979</td><td>0.00000</td><td class="g">1.07160</td><td>2022.06.06 17:50:45</td><td>1.07160</td><td>0.00</td><td>66.97</td></tr>
</tbody></table>
<svg class="a" style="left:20px;top:676px" width="14" height="315"><defs><g id="ic"><path d="M1.5 1.5h6l3 3v12h-9z" fill="#fff" stroke="#666"/><circle cx="9" cy="15" r="3" fill="#1a7fe0"/></g></defs>
<use href="#ic" y="0"/><use href="#ic" y="21"/><use href="#ic" y="42"/><use href="#ic" y="63"/><use href="#ic" y="84"/><use href="#ic" y="105"/><use href="#ic" y="126"/><use href="#ic" y="147"/><use href="#ic" y="168"/><use href="#ic" y="189"/><use href="#ic" y="210"/><use href="#ic" y="231"/><use href="#ic" y="252"/><use href="#ic" y="273"/><use href="#ic" y="294"/></svg>
<div class="a" style="left:17px;top:990px;width:1878px;height:20px;background:#cbcbcf;font-weight:bold;font-size:12.5px;line-height:20px;padding-left:5px"><span style="color:#888;font-weight:normal">◎</span> 盈/亏: 10 801.47&nbsp; 信用额: 0.00&nbsp; 存款: 20 000.00&nbsp; 取款: -10 000.00<span style="position:absolute;right:4px">20 801.47</span></div>
<div class="a" style="left:17px;top:1012px;width:1878px;height:1px;background:#333"></div>

<!-- nav items -->
<div class="a" style="left:0;top:345px;width:290px;font-size:13px;line-height:20px">
<div class="ni"><span style="position:absolute;left:35px;top:4px;width:9px;height:9px;border:1px solid #888;font-size:9px;line-height:7px;text-align:center;background:#fff">+</span><span class="fi">f</span><span class="nt">比尔 威廉姆</span></div>
<div class="ni"><span style="position:absolute;left:35px;top:4px;width:9px;height:9px;border:1px solid #888;font-size:9px;line-height:7px;text-align:center;background:#fff">+</span><span class="fi">f</span><span class="nt">Examples</span></div>
<div class="ni"><span class="fi">f</span><span class="nt">Accelerator</span></div>
<div class="ni"><span class="fi">f</span><span class="nt">Accumulation</span></div>
<div class="ni"><span class="fi">f</span><span class="nt">Alligator</span></div>
<div class="ni"><span class="fi">f</span><span class="nt">ATR</span></div>
<div class="ni"><span class="fi">f</span><span class="nt">Awesome</span></div>
<div class="ni"><span class="fi">f</span><span class="nt">Bands</span></div>
<div class="ni"><span class="fi">f</span><span class="nt">Bears</span></div>
<div class="ni"><span class="fi">f</span><span class="nt">Bulls</span></div>
<div class="ni"><span class="fi">f</span><span class="nt">CCI</span></div>
<div class="ni"><span class="fi">f</span><span class="nt">Custom Moving Averages</span></div>
<div class="ni"><span class="fi">f</span><span class="nt">Heiken Ashi</span></div>
<div class="ni" style="height:14px;overflow:hidden"><span class="fi">f</span><span class="nt">Ichimoku</span></div>
</div>
</body></html>
